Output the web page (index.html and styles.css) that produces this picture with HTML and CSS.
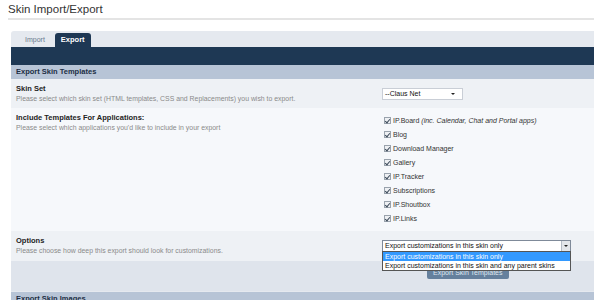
FILE: index.html
```html
<!DOCTYPE html>
<html>
<head>
    <meta charset="UTF-8" />
    <title>Skin Import/Export</title>
    <link rel="stylesheet" href="styles.css">
</head>
<body>
    <h1 class="page-title">Skin Import/Export</h1>

    <div class="tab-wrap">
        <ul class="tabs">
            <li class="tab">Import</li>
            <li class="tab active">Export</li>
        </ul>
        <div class="tab-bar"></div>

        <div class="section-head">Export Skin Templates</div>

        <div class="row row-alt">
            <div class="label">
                <strong>Skin Set</strong>
                <span>Please select which skin set (HTML templates, CSS and Replacements) you wish to export.</span>
            </div>
            <div class="field">
                <div class="select select-small">--Claus Net<span class="caret"></span></div>
            </div>
        </div>

        <div class="row">
            <div class="label">
                <strong>Include Templates For Applications:</strong>
                <span>Please select which applications you'd like to include in your export</span>
            </div>
            <div class="field field-list">
                <ul class="checks">
                    <li><span class="box"></span>IP.Board <em>(inc. Calendar, Chat and Portal apps)</em></li>
                    <li><span class="box"></span>Blog</li>
                    <li><span class="box"></span>Download Manager</li>
                    <li><span class="box"></span>Gallery</li>
                    <li><span class="box"></span>IP.Tracker</li>
                    <li><span class="box"></span>Subscriptions</li>
                    <li><span class="box"></span>IP.Shoutbox</li>
                    <li><span class="box"></span>IP.Links</li>
                </ul>
            </div>
        </div>

        <div class="row row-alt">
            <div class="label">
                <strong>Options</strong>
                <span>Please choose how deep this export should look for customizations.</span>
            </div>
            <div class="field">
                <div class="dropdown">
                    <div class="select select-wide">Export customizations in this skin only<span class="arrow-btn"></span></div>
                    <ul class="menu">
                        <li class="selected">Export customizations in this skin only</li>
                        <li>Export customizations in this skin and any parent skins</li>
                    </ul>
                </div>
            </div>
        </div>

        <div class="actions">
            <button class="btn">Export Skin Templates</button>
        </div>

        <div class="section-head">Export Skin Images</div>
    </div>
</body>
</html>
```

FILE: styles.css
```css
* {
    margin: 0;
    padding: 0;
    box-sizing: border-box;
}

body {
    font-family: "Liberation Sans", Arial, sans-serif;
    font-size: 7px;
    color: #333;
    background: #fff;
    padding: 0 0 0 8px;
}

.page-title {
    font-size: 11.5px;
    font-weight: normal;
    color: #333;
    padding-top: 3px;
    height: 20px;
    border-bottom: 2px solid #e4e4e4;
    margin-bottom: 11px;
}

.tab-wrap {
    margin-left: 3px;
    background: #e5e9ef;
    border-radius: 3px 0 0 0;
}

.tabs {
    list-style: none;
    display: flex;
    align-items: flex-end;
    height: 16px;
    padding-left: 8px;
}

.tab {
    height: 14px;
    line-height: 14px;
    padding: 0 6px;
    color: #6a7a8e;
    margin-right: 2px;
}

.tab.active {
    background: #1e3854;
    color: #fff;
    font-weight: bold;
    font-size: 7.5px;
    border-radius: 3px 3px 0 0;
    margin-left: 2px;
}

.tab-bar {
    height: 18px;
    background: #1e3854;
}

.section-head {
    height: 14px;
    line-height: 14px;
    padding-left: 5px;
    background: #b7c4d6;
    color: #1c2e44;
    font-weight: bold;
    font-size: 7.5px;
}

.row {
    display: flex;
    background: #f6f8fb;
}

.row-alt {
    background: #eef1f5;
}

.label {
    width: 371px;
    padding: 5px 5px 0;
    display: flex;
    flex-direction: column;
}

.label strong {
    font-size: 7.5px;
    color: #222;
    line-height: 10px;
}

.label span {
    color: #8a8a8a;
    font-size: 6.9px;
    line-height: 9px;
}

.field {
    flex: 1;
    padding: 9px 0 0;
}

.field-list {
    padding: 5px 0 6px;
}

.select {
    position: relative;
    background: #fff;
    border: 1px solid #c9ced6;
    height: 12px;
    line-height: 10px;
    padding-left: 2px;
    color: #111;
    font-size: 7px;
}

.select-small {
    width: 81px;
    margin-bottom: 8px;
}

.caret {
    position: absolute;
    right: 7px;
    top: 4px;
    border-left: 2px solid transparent;
    border-right: 2px solid transparent;
    border-top: 2px solid #222;
}

.checks {
    list-style: none;
    padding-left: 2px;
}

.checks li {
    display: flex;
    align-items: center;
    height: 14px;
    color: #333;
}

.checks em {
    margin-left: 2px;
}

.box {
    width: 7px;
    height: 7px;
    border: 1px solid #9aa3ad;
    background: #eef0f3;
    margin-right: 2px;
    position: relative;
}

.box::after {
    content: "";
    position: absolute;
    left: 1px;
    top: 0;
    width: 2px;
    height: 4px;
    border: solid #3c4a5a;
    border-width: 0 1px 1px 0;
    transform: rotate(40deg);
}

.dropdown {
    position: relative;
    width: 189px;
    margin: 0 0 9px;
}

.select-wide {
    width: 189px;
    border-color: #7f8a99;
}

.arrow-btn {
    position: absolute;
    right: 0;
    top: 0;
    width: 9px;
    height: 10px;
    background: #e3e6ea;
    border-left: 1px solid #b5bcc6;
}

.arrow-btn::after {
    content: "";
    position: absolute;
    left: 2px;
    top: 4px;
    border-left: 2px solid transparent;
    border-right: 2px solid transparent;
    border-top: 2px solid #222;
}

.menu {
    position: absolute;
    left: 0;
    top: 11px;
    width: 189px;
    list-style: none;
    background: #fff;
    border: 1px solid #555;
    z-index: 2;
}

.menu li {
    height: 9px;
    line-height: 9px;
    padding-left: 2px;
    color: #111;
    font-size: 7px;
}

.menu li.selected {
    background: #3399ff;
    color: #fff;
}

.actions {
    background: #dfe4ec;
    height: 30px;
    display: flex;
    align-items: flex-start;
    padding: 2px 0 0 416px;
    margin-bottom: 1px;
}

.btn {
    font-family: "Liberation Sans", Arial, sans-serif;
    font-size: 7px;
    height: 16px;
    padding: 2px 6px 0;
    background: #65809d;
    color: #dfe6ee;
    border: none;
    border-radius: 2px;
}
```
